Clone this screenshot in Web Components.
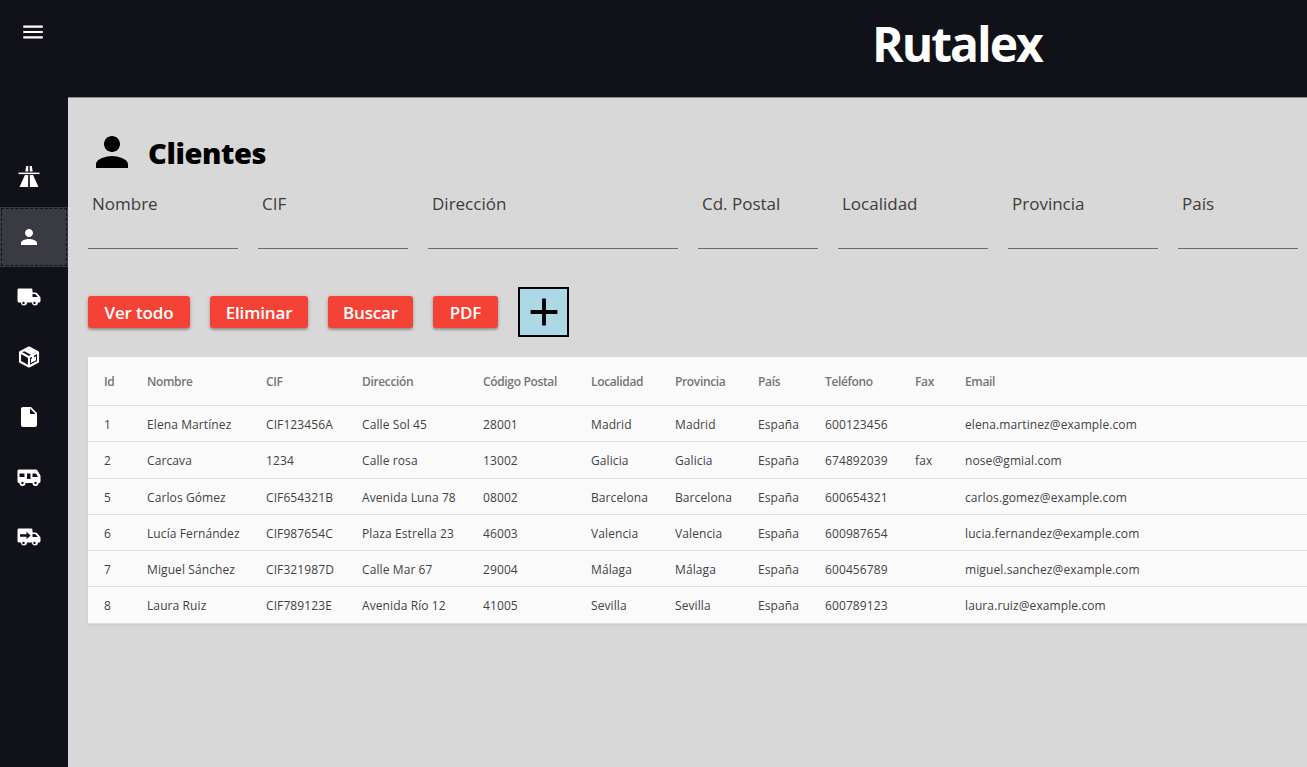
<!DOCTYPE html>
<html lang="es">
<head>
<meta charset="utf-8">
<title>Rutalex</title>
<style>
    html, body { margin: 0; height: 100%; overflow: hidden; background: #d8d8d8; }
    body { font-family: "Open Sans", "Noto Sans", sans-serif; }
</style>
</head>
<body>
<rutalex-app>
    <side-bar slot="side">
        <nav-item icon="highway"></nav-item>
        <nav-item icon="person" active></nav-item>
        <nav-item icon="truck"></nav-item>
        <nav-item icon="box"></nav-item>
        <nav-item icon="file"></nav-item>
        <nav-item icon="camper"></nav-item>
        <nav-item icon="transfer"></nav-item>
    </side-bar>
    <top-bar slot="top">Rutalex</top-bar>
    <clientes-page></clientes-page>
</rutalex-app>

<script>
(function() {
    'use strict';

    const ICONS = {
        menu: '<path d="M3 18h18v-2H3v2zm0-5h18v-2H3v2zm0-7v2h18V6H3z"/>',
        person: '<path d="M12 12c2.21 0 4-1.79 4-4s-1.79-4-4-4-4 1.79-4 4 1.79 4 4 4zm0 2c-2.67 0-8 1.34-8 4v2h16v-2c0-2.66-5.33-4-8-4z"/>',
        highway: '<path d="M9.200 1h2.100L11.200 6.500H8.300zM12.700 1h2.100l.9 5.500h-2.900zM7.900 10h3.300l-.1 12H2.500zM12.800 10h3.300l5.400 12h-8.600z"/><rect x="1.500" y="7.600" width="21" height="1.500"/>',
        truck: '<path fill-rule="evenodd" d="M2 3.500h12c.8 0 1.500.7 1.500 1.500v2.500h3.200c.5 0 .9.2 1.200.6l3 3.400c.3.300.6.800.600 1.300v3.200c0 .8-.7 1.500-1.500 1.500h-1a3 3 0 0 1-6 0h-5a3 3 0 0 1-6 0H2c-.8 0-1.500-.7-1.500-1.500V5c0-.8.700-1.500 1.500-1.500zM15.500 9v3h5.300l-2.600-3z"/><circle cx="6.500" cy="18" r="1.200" fill="#11111a"/><circle cx="17.500" cy="18" r="1.200" fill="#11111a"/>',
        box: '<path fill="none" stroke="currentColor" stroke-width="2.100" stroke-linejoin="round" d="M12 2.500l9 4.800v9.400l-9 4.800-9-4.800V7.300z"/><path fill="none" stroke="currentColor" stroke-width="2.100" d="M3.500 7.500l8.500 4.700 8.500-4.700M12 12.200V21M7.500 5l8.500 4.800v4.500"/><path d="M12 3l7 4-3.500 2-6.500-4z"/><path d="M14 14l5-2.800v4l-5 2.800z"/>',
        file: '<path d="M6 2c-1.100 0-1.990.9-1.990 2L4 20c0 1.100.89 2 1.990 2H18c1.100 0 2-.9 2-2V8l-6-6H6zm7 7V3.500L18.500 9H13z"/>',
        camper: '<path fill-rule="evenodd" d="M2 4.500h17c.6 0 1 .2 1.300.700l3 5c.2.300.2.600.2.900v5.400c0 .8-.7 1.500-1.500 1.500h-.5a3 3 0 0 1-6 0H8.500a3 3 0 0 1-6 0H2c-.8 0-1.500-.7-1.500-1.500V6c0-.8.700-1.500 1.500-1.500zM2.500 8.500v3.500h5V8.500zM10 8.500V14h3.500V8.500zM15.500 8.500V12h5.500l-2-3.500z"/><circle cx="5.500" cy="18" r="1.200" fill="#11111a"/><circle cx="18.500" cy="18" r="1.200" fill="#11111a"/>',
        transfer: '<path fill-rule="evenodd" d="M2 3.500h12c.8 0 1.500.7 1.500 1.500v2.500h3.200c.5 0 .9.2 1.200.6l3 3.400c.3.300.6.800.600 1.300v3.200c0 .8-.7 1.500-1.500 1.500h-1a3 3 0 0 1-6 0h-5a3 3 0 0 1-6 0H2c-.8 0-1.500-.7-1.500-1.500V5c0-.8.700-1.500 1.500-1.500zM15.500 9v3h5.300l-2.600-3z"/><path fill="#11111a" d="M3 9.300h6.500V6.800l4.200 3.700-4.200 3.700v-2.500H3z"/><circle cx="6.500" cy="18" r="1.200" fill="#11111a"/><circle cx="17.500" cy="18" r="1.200" fill="#11111a"/>',
        plus: '<path d="M19 13h-6v6h-2v-6H5v-2h6V5h2v6h6v2z"/>'
    };

    function iconSvg(name, size) {
        return `<svg xmlns="http://www.w3.org/2000/svg" viewBox="0 0 24 24" width="${size}" height="${size}" fill="currentColor" aria-hidden="true">${ICONS[name]}</svg>`;
    }

    class BaseElement extends HTMLElement {
        constructor() {
            super();
            this.attachShadow({ mode: 'open' });
        }
    }

    class RutalexApp extends BaseElement {
        connectedCallback() {
            this.shadowRoot.innerHTML = `
                <style>
                    :host {
                        display: grid;
                        grid-template-columns: 68px 1fr;
                        grid-template-rows: 98px 1fr;
                        height: 100vh;
                        overflow: hidden;
                    }
                    .side { grid-row: 1 / 3; }
                    main { min-width: 0; overflow: hidden; }
                </style>
                <div class="side"><slot name="side"></slot></div>
                <slot name="top"></slot>
                <main><slot></slot></main>
            `;
        }
    }

    class SideBar extends BaseElement {
        connectedCallback() {
            this.shadowRoot.innerHTML = `
                <style>
                    :host {
                        display: flex;
                        flex-direction: column;
                        height: 100%;
                        background: #11111a;
                        color: #fff;
                    }
                    .menu {
                        display: flex;
                        justify-content: center;
                        padding: 19px 0 102px;
                        line-height: 0;
                        margin-left: -3px;
                    }
                </style>
                <div class="menu">${iconSvg('menu', 26)}</div>
                <slot></slot>
            `;
        }
    }

    class NavItem extends BaseElement {
        connectedCallback() {
            this.shadowRoot.innerHTML = `
                <style>
                    :host {
                        display: flex;
                        align-items: center;
                        justify-content: center;
                        box-sizing: border-box;
                        height: 60px;
                        color: #fff;
                        line-height: 0;
                    }
                    :host([active]) {
                        background: #3a3a42;
                        outline: 1px dashed #11111a;
                        outline-offset: -2px;
                    }
                    svg { margin-left: -11px; }
                </style>
                ${iconSvg(this.getAttribute('icon'), 24)}
            `;
        }
    }

    class TopBar extends BaseElement {
        connectedCallback() {
            this.shadowRoot.innerHTML = `
                <style>
                    :host {
                        display: block;
                        box-sizing: border-box;
                        height: 98px;
                        padding-left: 804px;
                        background: #11111a;
                        border-bottom: 1px solid #8a8a8a;
                        color: #fff;
                        font-size: 48px;
                        font-weight: 700;
                        line-height: 88px;
                        letter-spacing: -2px;
                        white-space: nowrap;
                    }
                </style>
                <slot></slot>
            `;
        }
    }

    class SearchField extends BaseElement {
        connectedCallback() {
            this.shadowRoot.innerHTML = `
                <style>
                    :host {
                        display: block;
                        flex: none;
                        box-sizing: border-box;
                        height: 57px;
                        padding: 0 0 0 4px;
                        border-bottom: 1px solid #6b6b6b;
                        color: #3c3c3c;
                        font-size: 17px;
                        line-height: 24px;
                    }
                </style>
                <slot></slot>
            `;
            this.style.width = this.getAttribute('w') + 'px';
        }
    }

    class RedButton extends BaseElement {
        connectedCallback() {
            this.shadowRoot.innerHTML = `
                <style>
                    :host {
                        display: flex;
                        align-items: center;
                        justify-content: center;
                        flex: none;
                        box-sizing: border-box;
                        height: 32px;
                        padding-top: 1px;
                        background: #f44336;
                        border-radius: 3px;
                        box-shadow: 0 2px 2px rgba(0,0,0,.2), 0 1px 4px rgba(0,0,0,.2);
                        color: #fff;
                        font-size: 17px;
                        font-weight: 600;
                        letter-spacing: -0.15px;
                    }
                </style>
                <slot></slot>
            `;
            this.style.width = this.getAttribute('w') + 'px';
        }
    }

    class AddButton extends BaseElement {
        connectedCallback() {
            this.shadowRoot.innerHTML = `
                <style>
                    :host {
                        display: flex;
                        align-items: center;
                        justify-content: center;
                        flex: none;
                        box-sizing: border-box;
                        width: 51px;
                        height: 50px;
                        background: #add8e6;
                        border: 2px solid #000;
                        color: #000;
                        line-height: 0;
                    }
                </style>
                ${iconSvg('plus', 46)}
            `;
        }
    }

    const COLUMNS = [
        ['Id', 43], ['Nombre', 119], ['CIF', 96], ['Dirección', 121], ['Código Postal', 108],
        ['Localidad', 84], ['Provincia', 83], ['País', 67], ['Teléfono', 90], ['Fax', 50], ['Email', 358]
    ];

    const CLIENTES = [
        ['1', 'Elena Martínez', 'CIF123456A', 'Calle Sol 45', '28001', 'Madrid', 'Madrid', 'España', '600123456', '', 'elena.martinez@example.com'],
        ['2', 'Carcava', '1234', 'Calle rosa', '13002', 'Galicia', 'Galicia', 'España', '674892039', 'fax', 'nose@gmial.com'],
        ['5', 'Carlos Gómez', 'CIF654321B', 'Avenida Luna 78', '08002', 'Barcelona', 'Barcelona', 'España', '600654321', '', 'carlos.gomez@example.com'],
        ['6', 'Lucía Fernández', 'CIF987654C', 'Plaza Estrella 23', '46003', 'Valencia', 'Valencia', 'España', '600987654', '', 'lucia.fernandez@example.com'],
        ['7', 'Miguel Sánchez', 'CIF321987D', 'Calle Mar 67', '29004', 'Málaga', 'Málaga', 'España', '600456789', '', 'miguel.sanchez@example.com'],
        ['8', 'Laura Ruiz', 'CIF789123E', 'Avenida Río 12', '41005', 'Sevilla', 'Sevilla', 'España', '600789123', '', 'laura.ruiz@example.com']
    ];

    class ClientesTable extends BaseElement {
        connectedCallback() {
            const cols = COLUMNS.map(c => `<col style="width:${c[1]}px">`).join('');
            const head = COLUMNS.map(c => `<th>${c[0]}</th>`).join('');
            const rows = CLIENTES.map(r => `<tr>${r.map(v => `<td>${v}</td>`).join('')}</tr>`).join('');
            this.shadowRoot.innerHTML = `
                <style>
                    :host {
                        display: block;
                        background: #fafafa;
                        box-shadow: 0 1px 2px rgba(0,0,0,.08);
                    }
                    table {
                        table-layout: fixed;
                        width: 1219px;
                        border-collapse: collapse;
                        font-size: 12px;
                    }
                    th {
                        height: 48px;
                        padding: 2px 0 0 16px;
                        text-align: left;
                        font-weight: 600;
                        color: #757575;
                        letter-spacing: -0.35px;
                        border-bottom: 1px solid #dcdcdc;
                        box-sizing: border-box;
                    }
                    td {
                        height: 36px;
                        padding: 2px 0 0 16px;
                        color: #424242;
                        letter-spacing: 0.1px;
                        border-bottom: 1px solid #dcdcdc;
                        white-space: nowrap;
                        box-sizing: border-box;
                    }
                    tr:nth-child(2) td, tr:nth-child(6) td { height: 37px; }
                </style>
                <table>
                    <colgroup>${cols}</colgroup>
                    <thead><tr>${head}</tr></thead>
                    <tbody>${rows}</tbody>
                </table>
            `;
        }
    }

    class ClientesPage extends BaseElement {
        connectedCallback() {
            this.shadowRoot.innerHTML = `
                <style>
                    :host {
                        display: block;
                        box-sizing: border-box;
                        height: 100%;
                        padding: 30px 0 0 20px;
                        background: #d8d8d8;
                        width: 1239px;
                    }
                    h1 {
                        display: flex;
                        align-items: center;
                        gap: 12px;
                        margin: 0;
                        height: 48px;
                        color: #000;
                        font-size: 29px;
                        font-weight: 800;
                        letter-spacing: -0.4px;
                        line-height: 48px;
                    }
                    h1 svg { flex: none; }
                    h1 span { padding-top: 2px; }
                    .filters { display: flex; gap: 20px; margin-top: 16px; }
                    .actions { display: flex; align-items: center; gap: 20px; margin-top: 38px; height: 50px; }
                    clientes-table { margin-top: 20px; }
                </style>
                <h1>${iconSvg('person', 48)}<span>Clientes</span></h1>
                <div class="filters">
                    <search-field w="150">Nombre</search-field>
                    <search-field w="150">CIF</search-field>
                    <search-field w="250">Dirección</search-field>
                    <search-field w="120">Cd. Postal</search-field>
                    <search-field w="150">Localidad</search-field>
                    <search-field w="150">Provincia</search-field>
                    <search-field w="120">País</search-field>
                </div>
                <div class="actions">
                    <red-button w="102">Ver todo</red-button>
                    <red-button w="98">Eliminar</red-button>
                    <red-button w="85">Buscar</red-button>
                    <red-button w="65">PDF</red-button>
                    <add-button></add-button>
                </div>
                <clientes-table></clientes-table>
            `;
        }
    }

    customElements.define('rutalex-app', RutalexApp);
    customElements.define('side-bar', SideBar);
    customElements.define('nav-item', NavItem);
    customElements.define('top-bar', TopBar);
    customElements.define('search-field', SearchField);
    customElements.define('red-button', RedButton);
    customElements.define('add-button', AddButton);
    customElements.define('clientes-table', ClientesTable);
    customElements.define('clientes-page', ClientesPage);
})();
</script>
</body>
</html>
